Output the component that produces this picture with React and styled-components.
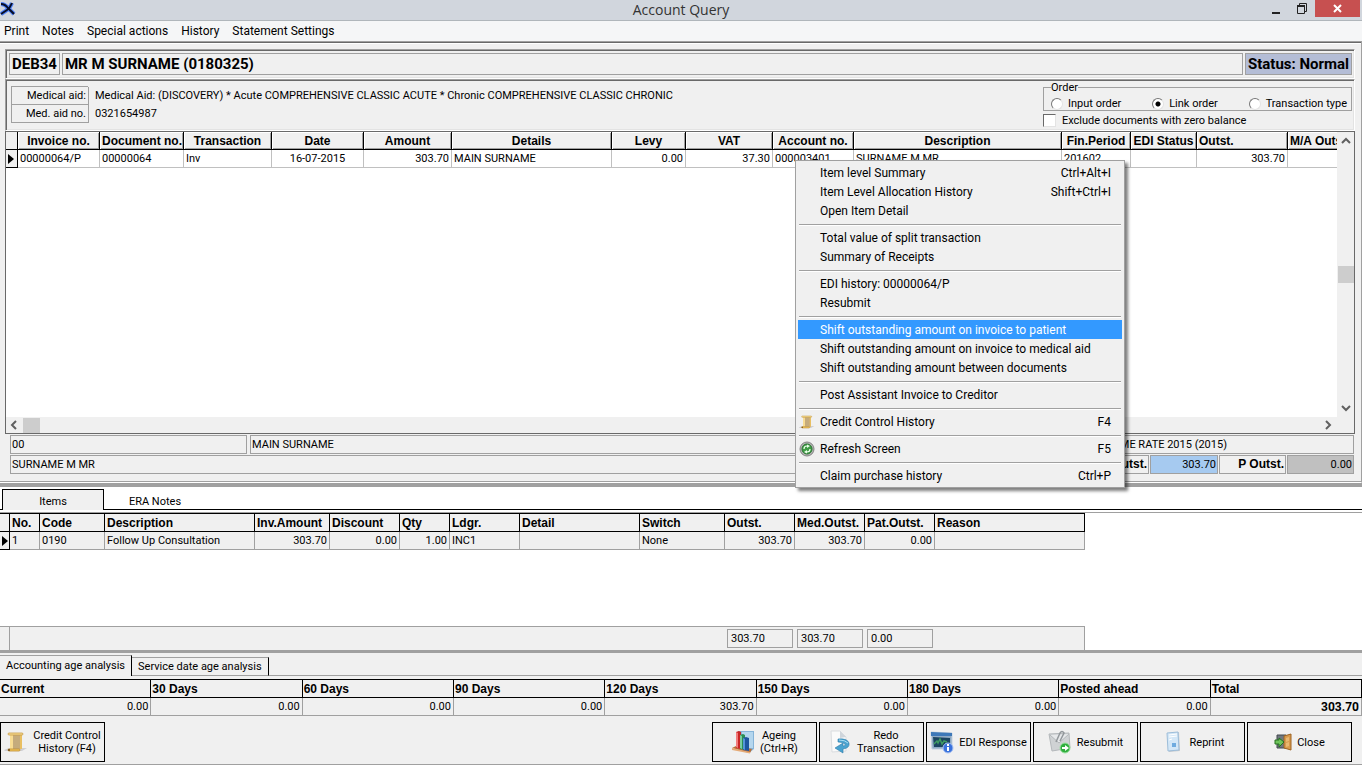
import React from "react";
import styled, { createGlobalStyle, css } from "styled-components";

const invoiceColumns = [
  { title: "Invoice no.", width: 82, value: "00000064/P" },
  { title: "Document no.", width: 84, value: "00000064" },
  { title: "Transaction", width: 88, value: "Inv" },
  { title: "Date", width: 92, value: "16-07-2015", align: "center" },
  { title: "Amount", width: 88, value: "303.70", align: "right" },
  { title: "Details", width: 160, value: "MAIN SURNAME" },
  { title: "Levy", width: 74, value: "0.00", align: "right" },
  { title: "VAT", width: 87, value: "37.30", align: "right" },
  { title: "Account no.", width: 81, value: "000003401" },
  { title: "Description", width: 208, value: "SURNAME M MR" },
  { title: "Fin.Period", width: 69, value: "201602" },
  { title: "EDI Status", width: 66, value: "" },
  { title: "Outst.", width: 91, value: "303.70", align: "right", head: "left" },
  { title: "M/A Outst.", width: 91, value: "", head: "left" },
];

const itemColumns = [
  { title: "No.", width: 30, value: "1" },
  { title: "Code", width: 65, value: "0190" },
  { title: "Description", width: 150, value: "Follow Up Consultation" },
  { title: "Inv.Amount", width: 75, value: "303.70", align: "right" },
  { title: "Discount", width: 70, value: "0.00", align: "right" },
  { title: "Qty", width: 50, value: "1.00", align: "right" },
  { title: "Ldgr.", width: 70, value: "INC1" },
  { title: "Detail", width: 120, value: "" },
  { title: "Switch", width: 85, value: "None" },
  { title: "Outst.", width: 70, value: "303.70", align: "right" },
  { title: "Med.Outst.", width: 70, value: "303.70", align: "right" },
  { title: "Pat.Outst.", width: 70, value: "0.00", align: "right" },
  { title: "Reason", width: 150, value: "" },
];

const ageing = [
  ["Current", "0.00"],
  ["30 Days", "0.00"],
  ["60 Days", "0.00"],
  ["90 Days", "0.00"],
  ["120 Days", "303.70"],
  ["150 Days", "0.00"],
  ["180 Days", "0.00"],
  ["Posted ahead", "0.00"],
  ["Total", "303.70"],
];

const menuGroups = [
  [
    { label: "Item level Summary", keys: "Ctrl+Alt+I" },
    { label: "Item Level Allocation History", keys: "Shift+Ctrl+I" },
    { label: "Open Item Detail" },
  ],
  [{ label: "Total value of split transaction" }, { label: "Summary of Receipts" }],
  [{ label: "EDI history: 00000064/P" }, { label: "Resubmit" }],
  [
    { label: "Shift outstanding amount on invoice to patient", active: true },
    { label: "Shift outstanding amount on invoice to medical aid" },
    { label: "Shift outstanding amount between documents" },
  ],
  [{ label: "Post Assistant Invoice to Creditor" }],
  [{ label: "Credit Control History", keys: "F4", icon: "scroll" }],
  [{ label: "Refresh Screen", keys: "F5", icon: "refresh" }],
  [{ label: "Claim purchase history", keys: "Ctrl+P" }],
];

const AppIcon = () => (
  <svg width="16" height="17" viewBox="0 0 16 17" aria-hidden="true">
    <path d="M1 4q4 0 7 4l6 6M12 3q-2 5-5 7l-6 4" stroke="#4f80f4" strokeWidth="4" fill="none" />
    <path d="M1 4q4 0 7 4l6 6M12 3q-2 5-5 7l-6 4" stroke="#060d26" strokeWidth="2" fill="none" />
  </svg>
);

const ScrollIcon = ({ size = 16 }) => (
  <svg width={size} height={size} viewBox="0 0 24 24" aria-hidden="true">
    <path d="M0 20l5-2h18l-5 3H1z" fill="#cfcfd3" />
    <path d="M6 4l13-1-2 2 1 14H7z" fill="#c5ab7c" />
    <path d="M6 5h3v14H6z" fill="#f8dc93" />
    <path d="M16 5h2v14h-2z" fill="#e9bf62" />
    <path d="M5 3h13q1 0 1 1t-1 1H5q-1 0-1-1t1-1z" fill="#f7dd93" stroke="#c79a45" strokeWidth="0.800" />
    <path d="M5 19h10q1 0 1 1t-1 1H5q-1 0-1-1t1-1z" fill="#f5c95e" stroke="#bb8a30" strokeWidth="0.800" />
    <path d="M4 19h2v2H4z" fill="#8a6222" />
  </svg>
);

const RefreshIcon = () => (
  <svg width="16" height="16" viewBox="0 0 16 16" aria-hidden="true">
    <circle cx="8" cy="8" r="7" fill="#b4b4b4" stroke="#858585" />
    <circle cx="8" cy="8" r="5" fill="#3f9c45" stroke="#2a7532" />
    <path d="M5 8q0-3 3-3h1M11 8q0 3-3 3H7" stroke="#e9ffe9" strokeWidth="1.200" fill="none" />
    <path d="M8 3.500l3 1.500-3 2zM8 9l-3 2 3 1.500z" fill="#e9ffe9" />
  </svg>
);

const AgeingIcon = () => (
  <svg width="24" height="24" viewBox="0 0 24 24" aria-hidden="true">
    <path d="M7 1h16v18l-5 4L7 20z" fill="#86b4d8" />
    <path d="M11 2h11v16H11z" fill="#b4d6ee" />
    <path d="M1 18l4-2 16 3-2 4z" fill="#b96f38" />
    <path d="M1 18l18 4v1.500L1 20z" fill="#e5ab78" />
    <path d="M5 2l3-1 2 1v17l-5-1z" fill="#c92525" />
    <path d="M5 2l2 1v15l-2-1z" fill="#f27c7c" />
    <path d="M9 5l3-1 2 1v15l-5-1z" fill="#2a8e55" />
    <path d="M9 5l2 1v13l-2-1z" fill="#7acca0" />
    <path d="M12 8l3-1 3 1v13l-6-1z" fill="#1e559f" />
    <path d="M12 8l2 1v11l-2-1z" fill="#5596d8" />
  </svg>
);

const RedoIcon = () => (
  <svg width="24" height="24" viewBox="0 0 24 24" aria-hidden="true">
    <path d="M3 1h9l6 6v14L4 22z" fill="#fafafa" stroke="#dadde0" />
    <path d="M12 1v7l6-1z" fill="#cfd5db" />
    <path
      d="M10 9q9-1 11 4 1 5-6 6v4l-8-5 8-5v3q3 0 2-2-2-2-7-2z"
      fill="#4aa3d0"
      stroke="#2b7ba8"
      strokeWidth="0.600"
    />
    <path d="M11 10q6 0 9 3" stroke="#a7dcf2" strokeWidth="1" fill="none" />
  </svg>
);

const ResponseIcon = () => (
  <svg width="24" height="24" viewBox="0 0 24 24" aria-hidden="true">
    <path d="M1 2l21 1v16L2 19z" fill="#8ea9c4" stroke="#c3d0dd" />
    <path d="M1 2l21 1v3L1 6z" fill="#3d78b8" />
    <path d="M3 7l17 1v9L4 17z" fill="#1c4560" />
    <path d="M4 14l3-3 1 2 2-4 2 5 2-3 3 1" stroke="#3f9c62" strokeWidth="1.500" fill="none" />
    <circle cx="18" cy="18" r="5" fill="#3a72dc" stroke="#a8c2f3" />
    <path d="M18 17v4M18 14v2" stroke="#fff" strokeWidth="2" />
  </svg>
);

const ResubmitIcon = () => (
  <svg width="24" height="24" viewBox="0 0 24 24" aria-hidden="true">
    <path d="M1 4l20-1 1 15-18 3z" fill="#cfd2d4" stroke="#b4b8bb" />
    <path d="M2 5l9 8 10-9" fill="#e6e8ea" stroke="#b4b8bb" />
    <path d="M8 12l4-9q2-3 4 0l-4 8" stroke="#92979b" strokeWidth="1.500" fill="none" />
    <circle cx="17" cy="18" r="5" fill="#2fae3d" stroke="#9be0a1" />
    <path d="M14 17h3v-2l4 3-4 3v-2h-3z" fill="#fff" />
  </svg>
);

const ReprintIcon = () => (
  <svg width="24" height="24" viewBox="0 0 24 24" aria-hidden="true">
    <path d="M7 4l11-2 1 19-11 1z" fill="#c7cbcf" />
    <path d="M6 3l11-1 1 18-11 1z" fill="#d3e7f7" stroke="#9dbdd9" />
    <path d="M8 5l8-1M8 7l8-1M8 10l3-1" stroke="#fff" strokeWidth="1" />
    <path d="M11 13h4v4h-4z" fill="#6fabdf" />
  </svg>
);

const CloseIcon = () => (
  <svg width="18" height="18" viewBox="0 0 18 18" aria-hidden="true">
    <path d="M3 2h9v13H3z" fill="#707880" stroke="#43484c" />
    <path d="M10 3l7-2v16l-7-2z" fill="#d79a4c" stroke="#9d6322" />
    <path d="M12 5l3-1v4l-3 1zM12 10l3-1v4l-3 1z" fill="#e9b871" />
    <path d="M1 7h4V5l5 4-5 5v-3H1z" fill="#6fc45b" stroke="#26721f" />
  </svg>
);

const Chevron = ({ d }) => (
  <svg width="10" height="10" viewBox="0 0 10 10" aria-hidden="true">
    <path d={d} stroke="#606060" strokeWidth="2" fill="none" />
  </svg>
);

const GridTable = ({ columns, marker, raised, label }) => (
  <Table $raised={raised} aria-label={label}>
    <colgroup>
      <col width={marker} />
      {columns.map((c) => (
        <col key={c.title} width={c.width} />
      ))}
    </colgroup>
    <thead>
      <tr>
        <th />
        {columns.map((c) => (
          <Head key={c.title} $raised={raised} $align={c.head}>
            {c.title}
          </Head>
        ))}
      </tr>
    </thead>
    <tbody>
      <tr>
        <MarkerCell>
          <svg width="6" height="10" viewBox="0 0 6 10" aria-hidden="true">
            <path d="M0 0l6 5-6 5z" fill="#000" />
          </svg>
        </MarkerCell>
        {columns.map((c) => (
          <Cell key={c.title} $raised={raised} $align={c.align}>
            {c.value}
          </Cell>
        ))}
      </tr>
    </tbody>
  </Table>
);

const App = () => (
  <>
    <GlobalStyle />
    <Page>
      <TitleBar>
        <AppIcon />
        <Title>Account Query</Title>
        <WindowButtons>
          <WindowButton aria-label="Minimize">
            <svg width="10" height="12" viewBox="0 0 10 12">
              <path d="M1 9h8v2H1z" fill="#222" />
            </svg>
          </WindowButton>
          <WindowButton aria-label="Restore">
            <svg width="10" height="12" viewBox="0 0 10 12" fill="none" stroke="#222">
              <path d="M2.500 2V.5h7v8H8" />
              <path d="M.5 3h7v7.500h-7z" />
              <path d="M0 3h8" strokeWidth="2" />
            </svg>
          </WindowButton>
          <WindowButton $close aria-label="Close window">
            <svg width="10" height="10" viewBox="0 0 10 10">
              <path d="M1 1l7 7M8 1L1 8" stroke="#fff" strokeWidth="2" />
            </svg>
          </WindowButton>
        </WindowButtons>
      </TitleBar>
      <MenuBar>
        {["Print", "Notes", "Special actions", "History", "Statement Settings"].map((m) => (
          <MenuBarButton key={m}>{m}</MenuBarButton>
        ))}
      </MenuBar>

      <Upper>
        <AccountBar>
          <AccountField>DEB34</AccountField>
          <AccountField $grow>MR M SURNAME (0180325)</AccountField>
          <AccountField $status>Status: Normal</AccountField>
        </AccountBar>
        <InfoBar>
          <AidList>
            <dt>Medical aid:</dt>
            <dd>
              Medical Aid: (DISCOVERY) * Acute COMPREHENSIVE CLASSIC ACUTE * Chronic COMPREHENSIVE
              CLASSIC CHRONIC
            </dd>
            <dt>Med. aid no.</dt>
            <dd>0321654987</dd>
          </AidList>
          <Filters>
            <OrderGroup>
              <legend>Order</legend>
              <Option>
                <Radio name="order" />
                Input order
              </Option>
              <Option>
                <Radio name="order" defaultChecked />
                Link order
              </Option>
              <Option>
                <Radio name="order" />
                Transaction type
              </Option>
            </OrderGroup>
            <Option>
              <Check />
              Exclude documents with zero balance
            </Option>
          </Filters>
        </InfoBar>
        <InvoiceGrid>
          <GridRow>
            <GridView>
              <GridTable columns={invoiceColumns} marker={12} raised label="Invoices" />
            </GridView>
            <VScroll>
              <Chevron d="M1 7l4-4 4 4" />
              <Thumb $vertical />
              <Chevron d="M1 3l4 4 4-4" />
            </VScroll>
          </GridRow>
          <HScroll>
            <Chevron d="M7 1L3 5l4 4" />
            <Thumb />
            <Chevron d="M3 1l4 4-4 4" />
          </HScroll>
        </InvoiceGrid>
        <Details>
          <DetailRow>
            <Box $basis={237}>00</Box>
            <Spacer />
            <Box $grow>MAIN SURNAME</Box>
            <Box $basis={264}>SCHEME RATE 2015 (2015)</Box>
          </DetailRow>
          <DetailRow>
            <Box $grow>SURNAME M MR</Box>
            <Box $basis={67} $label>
              M Outst.
            </Box>
            <Box $basis={68} $tone="#a6caf0" $right>
              303.70
            </Box>
            <Box $basis={67} $label>
              P Outst.
            </Box>
            <Box $basis={67} $tone="#c0c0c0" $right>
              0.00
            </Box>
          </DetailRow>
        </Details>
      </Upper>

      <TabStrip>
        <ItemTab $selected>Items</ItemTab>
        <ItemTab>ERA Notes</ItemTab>
      </TabStrip>
      <ItemsPane>
        <ItemsView>
          <GridTable columns={itemColumns} marker={10} label="Items" />
        </ItemsView>
        <ItemsFooter>
          <Sum>303.70</Sum>
          <Sum>303.70</Sum>
          <Sum>0.00</Sum>
        </ItemsFooter>
      </ItemsPane>

      <AgeTabs>
        <AgeTab $selected>Accounting age analysis</AgeTab>
        <AgeTab>Service date age analysis</AgeTab>
      </AgeTabs>
      <AgeTable>
        <thead>
          <tr>
            {ageing.map(([title]) => (
              <th key={title}>{title}</th>
            ))}
          </tr>
        </thead>
        <tbody>
          <tr>
            {ageing.map(([title, value]) => (
              <td key={title}>{value}</td>
            ))}
          </tr>
        </tbody>
      </AgeTable>

      <Actions>
        <ActionButton $first>
          <ScrollIcon size={24} />
          <span>
            Credit Control
            <br />
            History (F4)
          </span>
        </ActionButton>
        <ActionButton>
          <AgeingIcon />
          <span>
            Ageing
            <br />
            (Ctrl+R)
          </span>
        </ActionButton>
        <ActionButton>
          <RedoIcon />
          <span>
            Redo
            <br />
            Transaction
          </span>
        </ActionButton>
        <ActionButton>
          <ResponseIcon />
          <span>EDI Response</span>
        </ActionButton>
        <ActionButton>
          <ResubmitIcon />
          <span>Resubmit</span>
        </ActionButton>
        <ActionButton>
          <ReprintIcon />
          <span>Reprint</span>
        </ActionButton>
        <ActionButton>
          <CloseIcon />
          <span>Close</span>
        </ActionButton>
      </Actions>

      <ContextMenu role="menu">
        {menuGroups.map((group) => (
          <MenuGroup key={group[0].label}>
            {group.map((item) => (
              <MenuItem key={item.label} role="menuitem" $active={item.active}>
                <MenuIcon>
                  {item.icon === "scroll" && <ScrollIcon />}
                  {item.icon === "refresh" && <RefreshIcon />}
                </MenuIcon>
                <span>{item.label}</span>
                <Keys>{item.keys}</Keys>
              </MenuItem>
            ))}
          </MenuGroup>
        ))}
      </ContextMenu>
    </Page>
  </>
);

const GlobalStyle = createGlobalStyle`
  *,
  *::before,
  *::after {
    box-sizing: border-box;
  }

  body {
    margin: 0;
    background: #f0f0f0;
    color: #000;
    font-family: Roboto, "Liberation Sans", Arial, sans-serif;
    font-size: 11px;
    line-height: 13px;
  }

  button {
    font: inherit;
    color: inherit;
    background: none;
    border: 0;
    padding: 0;
  }

  th {
    font-family: "Liberation Sans", Arial, sans-serif;
  }

  svg {
    display: block;
    flex: none;
  }
`;

const sunken = css`
  border: 1px solid;
  border-color: #a0a0a0 #fff #fff #a0a0a0;
  box-shadow: inset 1px 1px #696969, inset -1px -1px #e3e3e3;
`;

const Page = styled.div`
  position: relative;
  display: flex;
  flex-direction: column;
  min-height: 100vh;
  overflow: hidden;
`;

const TitleBar = styled.header`
  display: grid;
  grid-template-columns: 1fr auto 1fr;
  align-items: start;
  height: 21px;
  background: #d1d6dd;
  border-bottom: 1px solid #b0b6bb;
`;

const Title = styled.h1`
  margin: 0;
  font-family: "Open Sans", "Noto Sans", sans-serif;
  font-size: 14px;
  line-height: 20px;
  font-weight: 400;
  color: #333;
`;

const WindowButtons = styled.div`
  display: flex;
  justify-content: flex-end;
  padding-right: 2px;
`;

const WindowButton = styled.button`
  display: flex;
  align-items: center;
  justify-content: center;
  width: ${({ $close }) => ($close ? 45 : 26)}px;
  height: 17px;
  background: ${({ $close }) => ($close ? "#c75050" : "none")};
`;

const MenuBar = styled.nav`
  display: flex;
  gap: 13px;
  height: 20px;
  padding-left: 4px;
  background: #f5f6f7;
  font-size: 12px;
  line-height: 20px;
`;

const MenuBarButton = styled.button`
  white-space: nowrap;
`;

const Upper = styled.main`
  flex: 1;
  display: flex;
  flex-direction: column;
  padding: 6px 6px 8px 5px;
  ${sunken}
  border-left: 0;
  border-right-color: #a0a0a0;
  box-shadow: inset 0 1px #696969, inset 0 2px #fff, inset 0 -1px #a0a0a0;
`;

const AccountBar = styled.div`
  ${sunken}
  display: flex;
  gap: 2px;
  height: 30px;
  padding: 3px 2px 3px 3px;
  margin-top: 1px;
`;

const AccountField = styled.div`
  flex: ${({ $grow }) => ($grow ? "1" : "none")};
  padding: 0 2px;
  border: 1px solid #a0a0a0;
  background: ${({ $status }) => ($status ? "#b4bdd6" : "none")};
  font-size: 15px;
  font-weight: 700;
  line-height: 21px;
  white-space: nowrap;
`;

const InfoBar = styled.div`
  ${sunken}
  display: flex;
  justify-content: space-between;
  height: 52px;
  padding: 2px 2px 0 5px;
`;

const AidList = styled.dl`
  display: grid;
  grid-template-columns: 78px auto;
  grid-auto-rows: 18px;
  align-content: start;
  margin: 4px 0 0;
  line-height: 18px;
  border-top: 1px solid #a0a0a0;
  border-image: linear-gradient(to right, #a0a0a0 78px, transparent 78px) 1;

  dt {
    padding: 1px 2px 0 0;
    line-height: 16px;
    border: 1px solid #a0a0a0;
    border-top: 0;
    text-align: right;
  }

  dd {
    margin: 0;
    padding-left: 6px;
  }
`;

const Filters = styled.div`
  display: flex;
  flex-direction: column;
  gap: 3px;
  width: 309px;
`;

const OrderGroup = styled.fieldset`
  display: flex;
  justify-content: space-between;
  margin: 0;
  height: 29px;
  padding: 5px 4px 0 7px;
  border: 1px solid #a0a0a0;

  legend {
    height: 10px;
    padding: 0;
    line-height: 11px;
  }
`;

const Option = styled.label`
  display: flex;
  align-items: center;
  gap: 5px;
  white-space: nowrap;
`;

const Radio = styled.input.attrs({ type: "radio" })`
  appearance: none;
  width: 12px;
  height: 12px;
  margin: 0;
  border: 1px solid;
  border-color: #777 #e3e3e3 #e3e3e3 #777;
  border-radius: 50%;
  background: #fff;

  &:checked {
    background: radial-gradient(circle, #000 2px, #fff 3px);
  }
`;

const Check = styled.input.attrs({ type: "checkbox" })`
  appearance: none;
  width: 13px;
  height: 13px;
  margin: 0 1px 0 0;
  border: 1px solid;
  border-color: #696969 #e3e3e3 #e3e3e3 #696969;
  background: #fff;
`;

const InvoiceGrid = styled.section`
  flex: 1;
  display: flex;
  flex-direction: column;
  min-height: 200px;
  border: 1px solid #696969;
`;

const GridRow = styled.div`
  flex: 1;
  display: flex;
`;

const GridView = styled.div`
  flex: 1;
  min-width: 0;
  overflow: hidden;
  background: #fff;
`;

const Table = styled.table`
  table-layout: fixed;
  width: 1px;
  min-width: 100%;
  border-collapse: separate;
  border-spacing: 0;

  th {
    background: #f0f0f0;
    border-right: 1px solid #000;
    border-bottom: 1px solid #000;
  }

  ${({ $raised }) =>
    !$raised &&
    css`
      border-top: 1px solid #000;
      min-width: 0;
    `}
`;

const Head = styled.th`
  height: 18px;
  padding: 0 2px;
  overflow: hidden;
  font-size: 12px;
  line-height: 16px;
  white-space: nowrap;
  text-align: ${({ $raised, $align }) => $align || ($raised ? "center" : "left")};
  ${({ $raised }) => $raised && "box-shadow: inset 1px 1px #fff, inset -1px -1px #a0a0a0;"}
`;

const Cell = styled.td`
  height: 18px;
  padding: 1px 2px 0;
  background: ${({ $raised }) => ($raised ? "#fff" : "#f0f0f0")};
  border: 0 solid ${({ $raised }) => ($raised ? "#c0c0c0" : "#a0a0a0")};
  border-width: 0 1px 1px 0;
  line-height: 16px;
  white-space: nowrap;
  text-align: ${({ $align }) => $align || "left"};
`;

const MarkerCell = styled.td`
  padding: 0 0 0 2px;
  background: #f0f0f0;
  border-right: 1px solid #000;
  border-bottom: 1px solid #000;
`;

const VScroll = styled.div`
  display: flex;
  flex-direction: column;
  justify-content: space-between;
  align-items: center;
  width: 17px;
  padding: 4px 0;
  background: #f0f0f0;
`;

const HScroll = styled.div`
  display: flex;
  align-items: center;
  gap: 4px;
  height: 16px;
  padding: 0 21px 0 3px;
  background: #f0f0f0;

  svg:last-child {
    margin-left: auto;
  }
`;

const Thumb = styled.div`
  width: ${({ $vertical }) => ($vertical ? 16 : 17)}px;
  height: ${({ $vertical }) => ($vertical ? 17 : 15)}px;
  background: #cdcdcd;
`;

const Details = styled.section`
  display: flex;
  flex-direction: column;
  gap: 1px;
  padding: 1px 1px 0 5px;
`;

const DetailRow = styled.div`
  display: flex;
  gap: 1px;
`;

const Spacer = styled.div`
  width: 1px;
`;

const Box = styled.div`
  flex: ${({ $grow, $basis }) => ($grow ? "1" : `0 0 ${$basis}px`)};
  height: 19px;
  padding: 0 1px;
  border: 1px solid #a0a0a0;
  background: ${({ $tone }) => $tone || "none"};
  font-family: ${({ $label }) => ($label ? '"Liberation Sans", Arial, sans-serif' : "inherit")};
  font-size: ${({ $label }) => ($label ? 12 : 11)}px;
  font-weight: ${({ $label }) => ($label ? 700 : 400)};
  line-height: 17px;
  text-align: ${({ $right, $label }) => ($right || $label ? "right" : "left")};
  white-space: nowrap;
`;

const TabStrip = styled.div`
  display: flex;
  height: 27px;
  padding: 2px 0 0 2px;
  border-top: 4px solid #a0a0a0;
  background: linear-gradient(#000, #000) bottom / 100% 1px no-repeat #fff;
`;

const ItemTab = styled.button`
  width: 102px;
  padding-top: 2px;
  border: 1px solid transparent;
  border-bottom: 0;
  ${({ $selected }) =>
    $selected &&
    css`
      border-color: #000;
      background: #f0f0f0;
    `}
`;

const ItemsPane = styled.section`
  padding-top: 2px;
  background: #fff;
  border-bottom: 3px solid #a0a0a0;
`;

const ItemsView = styled.div`
  min-height: 114px;
  overflow: hidden;
  border-top: 1px solid #a0a0a0;
`;

const ItemsFooter = styled.div`
  display: flex;
  gap: 4px;
  width: 1085px;
  height: 24px;
  padding: 2px 0 0 727px;
  border: 1px solid #a0a0a0;
  border-width: 1px 1px 0 0;
  background: linear-gradient(#a0a0a0, #a0a0a0) 9px 0 / 1px 100% no-repeat #f0f0f0;
`;

const Sum = styled.output`
  width: 66px;
  height: 19px;
  padding: 0 3px;
  border: 1px solid #a0a0a0;
  line-height: 17px;
`;

const AgeTabs = styled.div`
  display: flex;
  height: 23px;
  padding-top: 2px;
  background: linear-gradient(#a0a0a0, #a0a0a0) bottom / 100% 1px no-repeat;
`;

const AgeTab = styled.button`
  padding: 0 6px;
  border-top: 1px solid #a0a0a0;
  border-right: 1px solid #000;
  white-space: nowrap;
  ${({ $selected }) =>
    $selected
      ? css`
          padding-bottom: 2px;
          background: #f0f0f0;
        `
      : css`
          margin-top: 2px;
          border-bottom: 1px solid #a0a0a0;
        `}
`;

const AgeTable = styled.table`
  table-layout: fixed;
  width: 100%;
  margin-top: 3px;
  border-collapse: separate;
  border-spacing: 0;

  th {
    height: 19px;
    padding: 0 1px;
    border: solid #000;
    border-width: 1px 1px 1px 0;
    font-size: 12px;
    line-height: 16px;
    text-align: left;
  }

  td {
    height: 18px;
    padding: 1px 2px 0;
    border: solid #a0a0a0;
    border-width: 0 1px 1px 0;
    line-height: 16px;
    text-align: right;
  }

  td:last-child {
    font-size: 12px;
    font-weight: 700;
  }
`;

const Actions = styled.footer`
  display: flex;
  gap: 2px;
  padding: 6px 10px 2px 0;
  border-bottom: 1px solid #a0a0a0;
`;

const ActionButton = styled.button`
  display: flex;
  align-items: center;
  justify-content: center;
  gap: 5px;
  width: 105px;
  height: 40px;
  border: 1px solid #000;
  margin-right: ${({ $first }) => ($first ? "auto" : "0")};
  text-align: center;
  white-space: nowrap;
`;

const ContextMenu = styled.div`
  position: absolute;
  top: 160px;
  left: 795px;
  width: 330px;
  padding: 2px;
  background: #f0f0f0;
  border: 1px solid #a0a0a0;
  box-shadow: 3px 3px 3px rgba(0, 0, 0, 0.5);
  font-size: 12px;
`;

const MenuGroup = styled.div`
  & + &::before {
    content: "";
    display: block;
    height: 2px;
    margin: 4px 1px 2px;
    border-top: 1px solid #a0a0a0;
    border-bottom: 1px solid #fff;
  }
`;

const MenuItem = styled.button`
  display: flex;
  align-items: center;
  width: 100%;
  height: 19px;
  padding: 0 11px 0 0;
  line-height: 15px;
  color: ${({ $active }) => ($active ? "#fff" : "#000")};
  background: ${({ $active }) => ($active ? "#3399ff" : "none")};
  white-space: nowrap;

  span {
    padding-top: 1px;
  }
`;

const MenuIcon = styled.div`
  width: 22px;
  padding-left: 1px;
`;

const Keys = styled.span`
  margin-left: auto;
`;

export default App;
